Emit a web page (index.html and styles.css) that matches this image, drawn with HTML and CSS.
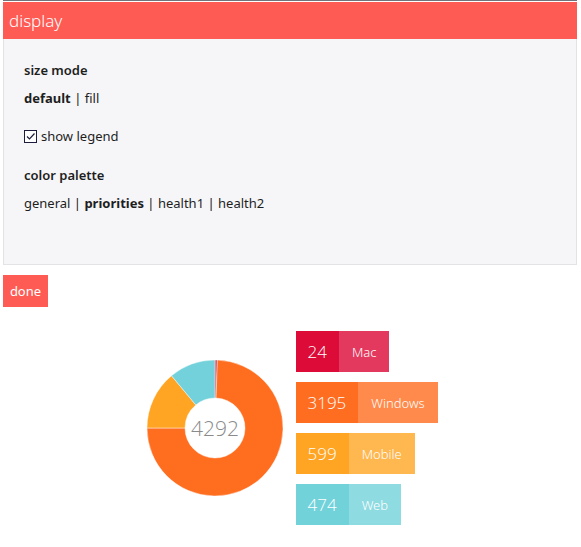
FILE: index.html
```html
<!DOCTYPE html>
<html>
<head>
<meta charset="utf-8">
<link rel="stylesheet" href="styles.css">
</head>
<body>
<div class="panel">
  <div class="panel-head">display</div>
  <div class="panel-body">
    <div class="label">size mode</div>
    <div class="options"><b>default</b> <span class="sep">|</span> fill</div>
    <label class="check"><span class="box"><svg width="11" height="11" viewBox="0 0 11 11"><path d="M2 5.5 L4.5 8 L9.5 2.5" fill="none" stroke="#1c1c3c" stroke-width="1.2"/></svg></span>show legend</label>
    <div class="label second">color palette</div>
    <div class="options">general <span class="sep">|</span> <b>priorities</b> <span class="sep">|</span> health1 <span class="sep">|</span> health2</div>
  </div>
</div>
<button class="done">done</button>
<div class="chart-row">
  <svg class="donut" width="136" height="136" viewBox="0 0 136 136">
    <g stroke="rgba(255,255,255,0.55)" stroke-width="0.8">
      <path fill="#e2345a" d="M68,0 A68,68 0 0 1 70.389,0.042 L69.054,38.019 A30,30 0 0 0 68,38 Z"/>
      <path fill="#ff6d1f" d="M70.389,0.042 A68,68 0 1 1 0,68 L38,68 A30,30 0 1 0 69.054,38.019 Z"/>
      <path fill="#ffa523" d="M0,68 A68,68 0 0 1 24.51,15.73 L48.813,44.938 A30,30 0 0 0 38,68 Z"/>
      <path fill="#72d1da" d="M24.51,15.73 A68,68 0 0 1 68,0 L68,38 A30,30 0 0 0 48.813,44.938 Z"/>
    </g>
    <text x="68" y="76" text-anchor="middle" class="total">4292</text>
  </svg>
  <div class="legend">
    <div class="item mac"><span class="val">24</span><span class="name">Mac</span></div>
    <div class="item win"><span class="val">3195</span><span class="name">Windows</span></div>
    <div class="item mob"><span class="val">599</span><span class="name">Mobile</span></div>
    <div class="item web"><span class="val">474</span><span class="name">Web</span></div>
  </div>
</div>
</body>
</html>
```
FILE: styles.css
```css
html, body {
  margin: 0;
  padding: 0;
  background: #fff;
}
body {
  padding: 0 4px 0 3px;
  font-family: "Noto Sans", "Open Sans", sans-serif;
  font-size: 13px;
  color: #1e1e1e;
}
.panel {
  border-top: 1px solid #72727a;
  padding-top: 1px;
}
.panel-head {
  background: #ff5b55;
  color: #fff;
  font-size: 17px;
  font-weight: 300;
  height: 37px;
  line-height: 37px;
  padding-left: 6px;
}
.panel-body {
  background: #f6f6f8;
  border: 1px solid #e3e3e6;
  border-top: none;
  padding: 22px 20px 51px 20px;
  height: 152px;
}
.label {
  font-weight: 600;
  line-height: 18px;
}
.label.second {
  margin-top: 21px;
}
.options {
  line-height: 18px;
  margin-top: 10px;
}
.options b {
  font-weight: 700;
}
.sep {
  color: #111;
}
.check {
  display: flex;
  align-items: center;
  gap: 4px;
  line-height: 18px;
  margin-top: 20px;
}
.box {
  width: 11px;
  height: 11px;
  border: 1px solid #1c1c3c;
  background: #fff;
  display: flex;
}
.done {
  margin-top: 10px;
  background: #ff5b55;
  color: #fff;
  border: none;
  font-family: inherit;
  font-size: 13px;
  height: 32px;
  width: 45px;
  padding: 0;
  display: block;
}
.chart-row {
  display: flex;
  justify-content: center;
  align-items: center;
  gap: 13px;
  margin-top: 24px;
}
.donut {
  display: block;
}
.total {
  font-family: "Open Sans", sans-serif;
  font-weight: 300;
  font-size: 21px;
  fill: #8a8a8a;
}
.legend {
  display: flex;
  flex-direction: column;
  gap: 10px;
  width: 138px;
}
.item {
  display: flex;
  height: 41px;
  align-items: stretch;
  align-self: flex-start;
  color: #fff;
}
.val {
  display: flex;
  align-items: center;
  padding: 0 12px;
  font-family: "Open Sans", sans-serif;
  font-weight: 300;
  font-size: 17px;
}
.name {
  display: flex;
  align-items: center;
  padding: 0 13px;
  font-size: 13px;
  font-weight: 300;
}
.mac .val { background: #dc0b37; }
.mac .name { background: #e4395e; }
.win .val { background: #ff6d20; }
.win .name { background: #ff8a4b; }
.mob .val { background: #ffa523; }
.mob .name { background: #ffb74f; }
.web .val { background: #72d2da; }
.web .name { background: #8fdbe2; }
```
